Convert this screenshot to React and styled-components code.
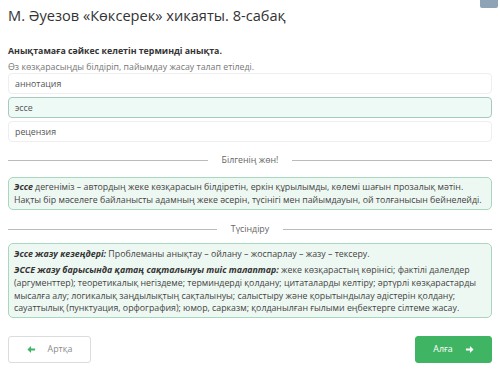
import React from 'react';
import styled, { createGlobalStyle } from 'styled-components';

const Global = createGlobalStyle`
  html, body { margin: 0; padding: 0; background: #fff; }
  body { font-family: "Open Sans", "Noto Sans", sans-serif; color: #333; }
  * { box-sizing: border-box; }
`

const Page = styled.div`
  position: relative;
  width: 500px;
  height: 369px;
  padding: 5px 8px 0 8px;
  overflow: hidden;
`

const Corner = styled.div`
  position: absolute;
  top: 0;
  right: 2px;
  width: 18px;
  height: 8px;
  background: #8ea3b6;
  border-radius: 0 0 2px 2px;
`

const Title = styled.h1`
  margin: 0;
  font-size: 14.6px;
  font-weight: 400;
  line-height: 20px;
  color: #333;
`

const Question = styled.div`
  margin-top: 20px;
  font-size: 8.8px;
  font-weight: 700;
  line-height: 13px;
  color: #333;
`

const Hint = styled.div`
  margin-top: 3px;
  font-size: 8.8px;
  line-height: 12px;
  color: #777;
`

const Options = styled.div`
  display: flex;
  flex-direction: column;
  gap: 3px;
`

const Option = styled.div`
  height: 21px;
  display: flex;
  align-items: center;
  padding: 0 6px;
  font-size: 8.8px;
  color: #555;
  border: 1px solid ${p => (p.$picked ? '#a9c9bd' : '#eeeeee')};
  background: ${p => (p.$picked ? '#eefaf5' : '#fff')};
  border-radius: 4px;
`

const Divider = styled.div`
  display: flex;
  align-items: center;
  gap: 14px;
  height: 12px;
  margin: ${p => p.$m};
  font-size: 8.8px;
  color: #666;
  &::before, &::after {
    content: '';
    flex: 1;
    height: 1px;
    background: #bbb;
  }
`

const InfoBox = styled.div`
  border: 1px solid #a9d6bf;
  background: #eef8f2;
  border-radius: 5px;
  padding: ${p => p.$pad};
  font-size: 8.8px;
  line-height: 12.7px;
  color: #444;
  p { margin: 0; }
  p + p { margin-top: 3px; }
  b { font-style: italic; color: #333; }
`

const Footer = styled.div`
  display: flex;
  justify-content: space-between;
  margin-top: 18px;
`

const NavButton = styled.button`
  width: ${p => p.$w}px;
  height: 27px;
  display: flex;
  align-items: center;
  justify-content: center;
  gap: 12px;
  font-family: inherit;
  font-size: 8.8px;
  border-radius: 3px;
  border: 1px solid ${p => (p.$primary ? '#3fb564' : '#dcdcdc')};
  background: ${p => (p.$primary ? '#3fb564' : '#fff')};
  color: ${p => (p.$primary ? '#fff' : '#8a8a8a')};
  padding: 0;
`

const Arrow = ({ color, dir }) => (
  <svg width="9" height="9" viewBox="0 0 10 10" style={{ transform: dir === 'left' ? 'scaleX(-1)' : 'none' }}>
    <path d="M1 4 H5.5 V1.2 L9.5 5 L5.5 8.8 V6 H1 Z" fill={color} />
  </svg>
)

export default function App() {
  return (
    <Page>
      <Global />
      <Corner />
      <Title>М. Әуезов «Көксерек» хикаяты. 8-сабақ</Title>
      <Question>Анықтамаға сәйкес келетін терминді анықта.</Question>
      <Hint>Өз көзқарасыңды білдіріп, пайымдау жасау талап етіледі.</Hint>
      <Options>
        <Option>аннотация</Option>
        <Option $picked>эссе</Option>
        <Option>рецензия</Option>
      </Options>
      <Divider $m="12px 0 11px 0">Білгенің жөн!</Divider>
      <InfoBox $pad="3px 8px 3px 5px">
        <p><b>Эссе</b> дегеніміз – автордың жеке көзқарасын білдіретін, еркін құрылымды, көлемі шағын прозалық мәтін. Нақты бір мәселеге байланысты адамның жеке әсерін, түсінігі мен пайымдауын, ой толғанысын бейнелейді.</p>
      </InfoBox>
      <Divider $m="13px 0 8px 0">Түсіндіру</Divider>
      <InfoBox $pad="4px 8px 2px 5px">
        <p><b>Эссе жазу кезеңдері:</b> Проблеманы анықтау – ойлану – жоспарлау – жазу – тексеру.</p>
        <p><b>ЭССЕ жазу барысында қатаң сақталынуы тиіс талаптар:</b> жеке көзқарастың көрінісі; фактілі далелдер (аргументтер); теоретикалық негіздеме; терминдерді қолдану; цитаталарды келтіру; әртүрлі көзқарастарды мысалға алу; логикалық заңдылықтың сақталынуы; салыстыру және қорытындылау әдістерін қолдану; сауаттылық (пунктуация, орфография); юмор, сарказм; қолданылған ғылыми еңбектерге сілтеме жасау.</p>
      </InfoBox>
      <Footer>
        <NavButton $w={83}><Arrow color="#3fb564" dir="left" />Артқа</NavButton>
        <NavButton $w={77} $primary>Алға<Arrow color="#fff" /></NavButton>
      </Footer>
    </Page>
  );
}
